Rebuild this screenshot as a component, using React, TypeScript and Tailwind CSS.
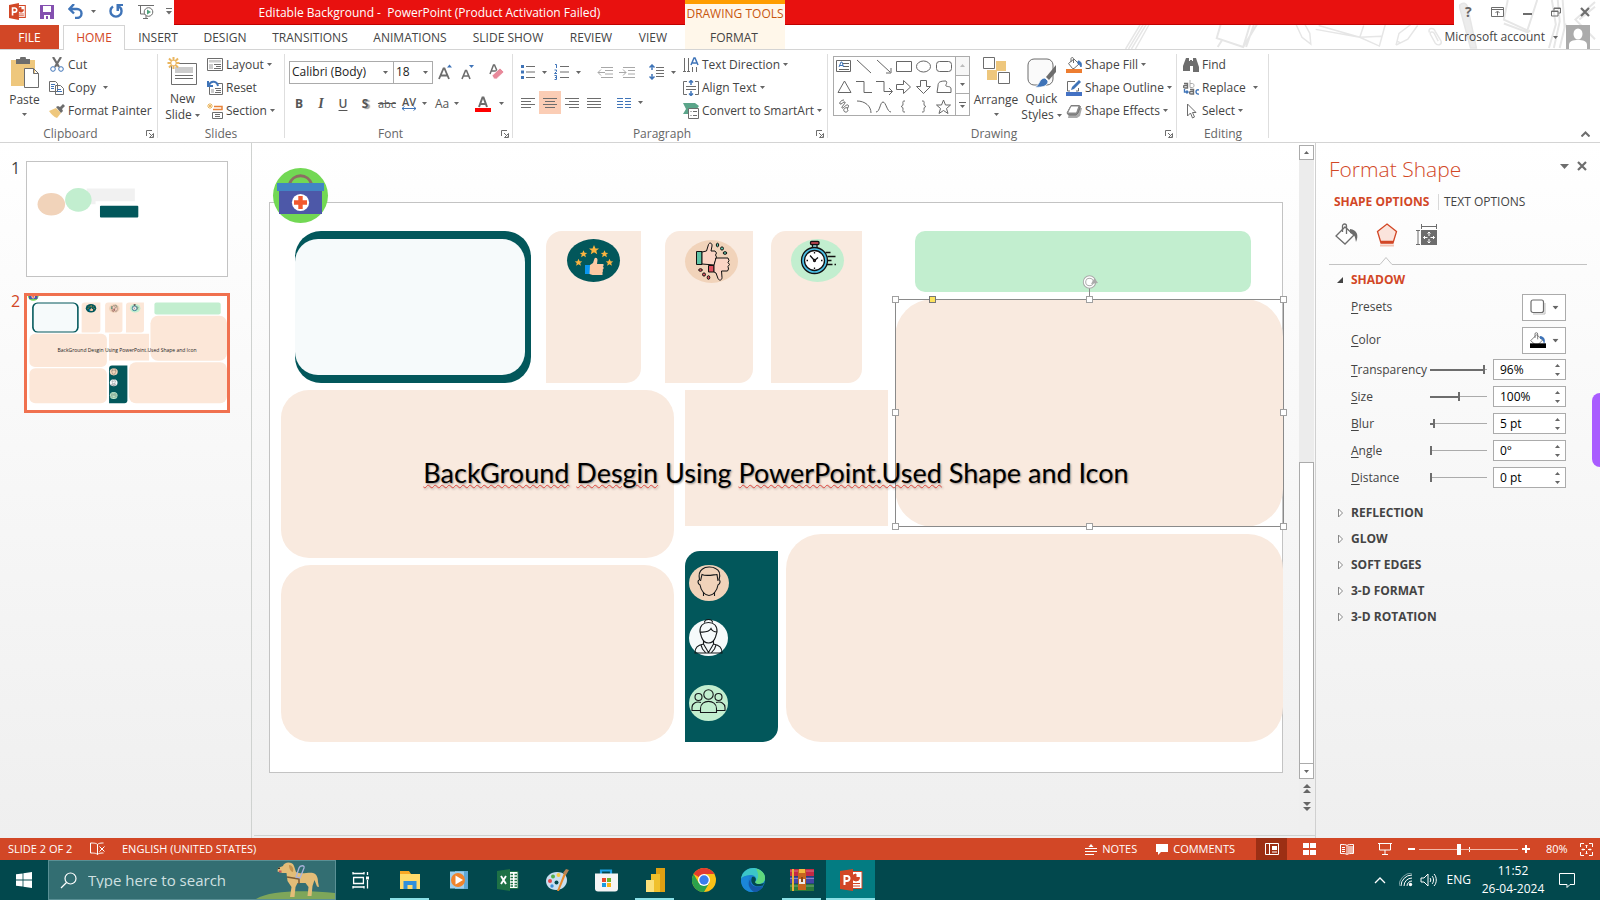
import React from "react";

type Kids = { children?: React.ReactNode };

const Svg = ({ s = 16, w, h, vb, className, children }: Kids & { s?: number; w?: number; h?: number; vb?: string; className?: string }) => (
  <svg width={w ?? s} height={h ?? s} viewBox={vb ?? `0 0 ${w ?? s} ${h ?? s}`} fill="none" stroke="#6d6d6d" strokeWidth="1" className={`shrink-0 ${className ?? ""}`} aria-hidden="true">
    {children}
  </svg>
);

const Arrow = ({ className = "" }: { className?: string }) => (
  <svg width="5" height="3" viewBox="0 0 5 3" className={`shrink-0 ${className}`} aria-hidden="true">
    <path d="M0 0h5L2.5 3z" fill="#666" />
  </svg>
);

const Sep = () => <span className="h-[22px] w-px shrink-0 bg-[#d9d9d9]" />;

const Row = ({ icon, text, arrow, wide }: { icon: React.ReactNode; text: string; arrow?: boolean; wide?: boolean }) => (
  <button className="flex h-[23px] items-center gap-[3px] whitespace-nowrap text-[#444]">
    {icon}
    <span>{text}</span>
    {arrow && <Arrow className={wide ? "ml-1" : ""} />}
  </button>
);

const Group = ({ label, launcher, width, children }: Kids & { label: string; launcher?: boolean; width: string }) => (
  <section aria-label={label} className={`relative flex shrink-0 flex-col pt-[3px] ${width}`}>
    <div className="flex h-[72px]">{children}</div>
    <div className="mt-[2px] flex h-4 items-center justify-center text-[#666]">{label}</div>
    {launcher && (
      <button aria-label={`${label} options`} className="absolute bottom-[4px] right-[4px]">
        <Svg s={8}>
          <path d="M.5 6V.5H6M3 3l3.5 3.5M7.5 3.5v4h-4z" />
        </Svg>
      </button>
    )}
    <span className="absolute bottom-1 right-0 top-1 w-px bg-[#dedede]" />
  </section>
);

const PptIcon = ({ s = 17 }: { s?: number }) => (
  <svg width={s} height={s} viewBox="0 0 24 24" className="shrink-0" aria-hidden="true">
    <path d="M12 3.5h11v17H12z" fill="#fff" stroke="#d24726" strokeWidth="1.5" />
    <path d="M17 6a3.5 3.5 0 1 0 3.5 3.5H17zM14 15.5h7M14 18h7" fill="#d24726" stroke="#d24726" strokeWidth="1.2" />
    <path d="M0 2.8 14 0v24L0 21.200z" fill="#d24726" />
    <path d="M5 17.500V7h3a2.800 2.800 0 0 1 0 5.800H5" fill="none" stroke="#fff" strokeWidth="2.300" />
  </svg>
);

const STAR = "M0-5 1.500-1.600 5-1.500 2.300.8 3.200 4.300 0 2.300-3.200 4.300-2.300.8-5-1.500-1.500-1.600z";

/* Shapes and clip art of slide 2, in slide units. */
const SlideArt = ({ thin }: { thin?: boolean }) => (
  <svg viewBox="0 0 1014 571" className={`absolute inset-0 h-full w-full ${thin ? "overflow-hidden" : "overflow-visible"}`} aria-hidden="true">
    <rect x="26" y="29" width="236" height="152" rx="26" fill="#02575b" />
    {thin ? <rect x="34" y="34" width="220" height="142" rx="22" fill="#f6fafb" /> : <rect x="26" y="37" width="230" height="136" rx="23" fill="#f6fafb" />}
    <g fill={thin ? "#fce7d8" : "#f9eadf"}>
      <path d="M277 181V45a16 16 0 0 1 16-16h79v137a15 15 0 0 1-15 15z" />
      <path d="M396 181V44a15 15 0 0 1 15-15h73v138a14 14 0 0 1-14 14z" />
      <path d="M502 181V44a15 15 0 0 1 15-15h76v138a14 14 0 0 1-14 14z" />
      <rect x="12" y="188" width="393" height="168" rx="28" />
      <rect x="416" y="188" width="203" height="136" />
      <rect x="12" y="363" width="393" height="177" rx="30" />
      <rect x="517" y="332" width="497" height="208" rx="35" />
      <rect x="626" y="97" width="388" height="228" rx="38" />
    </g>
    <rect x="646" y="29" width="336" height="61" rx="10" fill="#c2eecf" />
    <path d="M416 540V364a15 15 0 0 1 15-15h78v176a15 15 0 0 1-15 15z" fill="#02575b" />

    {/* first-aid kit */}
    <g>
      <circle cx="31.500" cy="-6.500" r="27.500" fill="#72d854" />
      <path d="M20.500-18a11.500 11.500 0 0 1 22 0" fill="none" stroke="#8d6e63" strokeWidth="3" />
      <path d="M10-12h43v24H10z" fill="#4d58a8" />
      <path d="M8-19h47v8H8z" fill="#4284c4" />
      <circle cx="31.500" cy="0.500" r="8.600" fill="#fff" />
      <path d="M31.500-6v13M25 .5h13" stroke="#f1592f" strokeWidth="4.400" />
    </g>

    {/* rating */}
    <ellipse cx="324.500" cy="58.500" rx="26.500" ry="21.500" fill="#02575b" />
    <g fill="#fbb340">
      <path d={STAR} transform="translate(325 48)" />
      <path d={STAR} transform="translate(314.500 52) scale(.75)" />
      <path d={STAR} transform="translate(335.500 52) scale(.75)" />
      <path d={STAR} transform="translate(309.500 60.500) scale(.75)" />
      <path d={STAR} transform="translate(340.500 60.500) scale(.75)" />
    </g>
    <path d="M316 63h6v9h-6z" fill="#0a96f0" />
    <path d="M321 63l3-2 1.500-4.500c1-1.500 3-.5 3 1.500l-.5 4h6.500v2l-.8.500.8.500v2l-.8.500.3 2-.5.500v3h-10l-3-1z" fill="#fdc9a4" />

    {/* thumbs up and down */}
    <ellipse cx="442.500" cy="59.500" rx="26.500" ry="21.500" fill="#f1d3ba" />
    <g stroke="#111" strokeWidth="1" strokeLinejoin="round">
      <path d="M427.500 49.500h5.500v13h-5.500z" fill="#5fc3a5" />
      <path d="M433 50l4.500-1 2-6.500c1-2.500 4-1.500 3.500 1.500l-1 5h4l1.500 2-1 2 1 2-1 2 1 2-2 1v3l-12.500-1z" fill="#fbd5c5" />
      <path d="M439.500 63.500h5.500v6.500h-5.500z" fill="#e0505e" />
      <path d="M447 56h12l1 2.500-1 2 1.500 2-1.500 2 .5 2.500-1 2h-6l.5 6.500c0 3-3 3.500-4 1l-2-5.500-2-1v-7z" fill="#fbd5c5" />
      <g fill="#5fc3a5">
        <ellipse cx="448.500" cy="43" rx="1.200" ry="1.800" />
        <ellipse cx="453" cy="46.500" rx="1.500" ry="1.600" />
        <ellipse cx="456" cy="51" rx="1.800" ry="1.300" />
      </g>
      <g fill="#e0505e">
        <ellipse cx="431.500" cy="68" rx="1.800" ry="1.300" />
        <ellipse cx="435" cy="72.500" rx="1.500" ry="1.600" />
        <ellipse cx="439.500" cy="75.500" rx="1.300" ry="1.800" />
      </g>
    </g>

    {/* stopwatch */}
    <ellipse cx="548.500" cy="58.500" rx="26.500" ry="21.500" fill="#c2eecf" />
    <g stroke="#111" strokeWidth="1.300" fill="none">
      <path d="M543.500 42h4.500v4h-4.500z" fill="#9adbe6" />
      <rect x="541.500" y="39.500" width="8.500" height="3" rx="1" fill="#e0505e" />
      <circle cx="545.500" cy="58.500" r="13" fill="#4cc3ea" />
      <circle cx="545.500" cy="58.500" r="10" fill="#fff" />
      <path d="M541 53.500l4.500 5 3.500-3M545.500 50v1.500M545.500 65.500V67M537.500 58.500h1.500M552 58.500h1.500" />
      <circle cx="545.500" cy="58.500" r="1" fill="#e0505e" />
      <path d="M556.500 50.500h5M558.500 54.500h8M559 58.500h3.500M557.500 62.500h6M565.500 62.500h1.500" />
    </g>

    {/* people */}
    <ellipse cx="440" cy="381" rx="20" ry="18" fill="#f1d3ba" />
    <g stroke="#15181a" strokeWidth="1.100" fill="none">
      <path d="M430.500 378c-1-5 0-9 3-11 3-2.500 10-2.500 13-.5 4 1.500 5 6 3.500 11.500M430.500 378c-2 0-2 4 .5 5 1 6 5 10.500 9 10.500s8-4.500 9-10.500c2.500-1 2.500-5 1-5M431.500 379l1.500-6.500c4 2 10 .5 15 0l1 6.500M434.500 390v4M445.500 390v4" />
    </g>
    <ellipse cx="439.500" cy="436" rx="19.500" ry="18" fill="#f6fafb" />
    <g stroke="#15181a" strokeWidth="1.100" fill="none">
      <path d="M435.500 420.500c0-4 8-4 8 0M431 430c-.5-6 3-9.500 8.500-9.500s9 3.500 8.500 9.500l-1.500 5c-1 3-3.500 6-7 6s-6-3-7-6zM431.500 430c6 .5 9-1 10.500-3.500 1 2 3.500 3.500 6 3.500M434.500 438.500v3.500c-6 1.500-8.500 3-8.500 9h27c0-6-2.500-7.500-8.500-9v-3.500M434.500 442l5 8.500 5-8.500M432 443l1.500 4 3 3.500M447 443l-1.500 4-3 3.500" />
    </g>
    <ellipse cx="439.500" cy="501" rx="19.500" ry="18" fill="#c2eecf" />
    <g stroke="#15181a" strokeWidth="1.100" fill="none">
      <circle cx="439.500" cy="492.500" r="4.700" />
      <circle cx="429.500" cy="495" r="3.500" />
      <circle cx="449.500" cy="495" r="3.500" />
      <path d="M431.500 510.500v-4c0-9.500 16-9.500 16 0v4zM431.500 508.500h-8.500v-3c0-4 4-6.500 9-5M447.500 508.500h8.500v-3c0-4-4-6.500-9-5" />
    </g>
  </svg>
);

const HANDLES: [number, number][] = [
  [626, 97], [820, 97], [1014, 97], [626, 210], [1014, 210], [626, 324], [820, 324], [1014, 324],
];

const Selection = () => (
  <svg viewBox="0 0 1014 571" className="absolute inset-0 h-full w-full overflow-visible" aria-hidden="true">
    <path d="M626.500 97.500h388v227h-388zM820.500 97V86" fill="none" stroke="#8a8a8a" />
    {HANDLES.map(([x, y]) => (
      <rect key={`${x}-${y}`} x={x - 2.5} y={y - 2.5} width="6" height="6" fill="#fff" stroke="#a0a0a0" />
    ))}
    <rect x="660.500" y="94.500" width="6" height="6" fill="#fde25d" stroke="#777" />
    <circle cx="820.500" cy="80" r="5" fill="#fff" stroke="#aaa" strokeWidth="3.400" />
    <circle cx="820.500" cy="80" r="5" fill="none" stroke="#fff" strokeWidth="1.400" />
    <path d="M822 82l7-1-3.500-5z" fill="#aaa" />
  </svg>
);

const TABS: [string, string][] = [
  ["INSERT", "w-[66px]"], ["DESIGN", "w-[68px]"], ["TRANSITIONS", "w-[102px]"], ["ANIMATIONS", "w-[98px]"],
  ["SLIDE SHOW", "w-[98px]"], ["REVIEW", "w-[68px]"], ["VIEW", "w-[56px]"],
];

const Doodles = () => (
  <svg viewBox="0 0 500 50" className="absolute right-0 top-0 h-[49px] w-[500px]" fill="none" stroke="#e6e6e6" strokeWidth="1.500" aria-hidden="true">
    <path d="M21 50 36 25M24 50 39 25M27 50 42 25M31 50 45 25" />
    <path d="M118 25l-4 14 27 9 14-23M141 48l7-23M120 40l-5 8M144 48l8-23" strokeWidth="2" />
    <path d="M195 25l6 13 9 7-1-11-5-9" />
    <path d="M215 30l45 8 20 9 6-22M218 26l42 12 4-12M260 38l22-1" />
    <path d="M297 46l3-12 12-9M297 46l12-6 10-14M298 42l4 2" />
    <path d="M331 33c-2-4 4-6 6-1l6 10c1 4-4 5-6 2l-5-9c-1-3 3-3 4-1l4 8" />
    <path d="M362 5c3-3 7-2 8 2l9 42h-6L362 8z" fill="#ececec" />
    <path d="M411 0l-4 20 24 11 10-31M407 24l24 9 3-2M456 0l4 25-7 24M462 0l2 22-6 27M467 0l2 28" strokeWidth="2" />
    <path d="M470 24l-6 25M500 2l-20 18 20 20M484 20l16-13" strokeWidth="2" />
  </svg>
);

const Header = () => (
  <header className="relative shrink-0 bg-white">
    <Doodles />
    <div className="relative flex h-[25px]">
      <div className="flex w-[174px] shrink-0 items-center pb-[2px] pl-[9px]">
        <PptIcon />
        <button aria-label="Save" className="ml-[14px]">
          <Svg s={14}><path d="M0 0h14v14H0z" fill="#8450b0" stroke="none" /><path d="M3 1h8v6H3zM4 10h6v4H4z" fill="#fff" stroke="none" /><path d="M6 11h2v3H6z" fill="#8450b0" stroke="none" /></Svg>
        </button>
        <button aria-label="Undo" className="ml-[14px] flex items-center gap-2">
          <Svg s={15}><path d="M2 5h7a4 4 0 0 1 0 9H7M6 0 1.500 5 6 9.500" stroke="#3f74b8" strokeWidth="2.400" /></Svg>
          <Arrow />
        </button>
        <button aria-label="Repeat" className="ml-[13px]">
          <Svg s={15}><path d="M4 2.500a5.500 5.500 0 1 0 6 0" stroke="#3f74b8" strokeWidth="2.400" /><path d="M7.500 0H14v2H10v5H7.500z" fill="#3f74b8" stroke="none" /></Svg>
        </button>
        <button aria-label="Start from beginning" className="ml-[14px]">
          <Svg w={16} h={16}><path d="M0 1.500h16M2.500 2v8H7M5 14.500h5M8 11v4" /><circle cx="10.500" cy="8" r="4.300" fill="#fff" /><path d="M9 5.500v5l4-2.500z" fill="#4ea37b" stroke="none" /></Svg>
        </button>
        <button aria-label="Customize toolbar" className="ml-[12px]">
          <Svg w={6} h={7}><path d="M0 .5h6" /><path d="M0 3h6L3 6.500z" fill="#6d6d6d" stroke="none" /></Svg>
        </button>
      </div>
      <div className="flex w-[511px] shrink-0 items-center justify-center whitespace-pre border-b border-[#c00000] bg-[#e8110f] pt-[2px] text-white">
        {"Editable Background -  PowerPoint (Product Activation Failed)"}
      </div>
      <div className="flex w-[100px] shrink-0 items-center justify-center whitespace-nowrap border-t-4 border-[#ff9d00] bg-[#fff7ea] pb-[2px] text-[#c8560e]">DRAWING TOOLS</div>
      <div className="grow border-b border-[#c00000] bg-[#e8110f]" />
      <div className="flex w-[146px] shrink-0 items-center justify-between pb-[2px] pl-[11px] pr-[10px]">
        <button aria-label="Help" className="text-[14px] font-bold leading-none text-[#666]">?</button>
        <button aria-label="Ribbon display options"><Svg w={13} h={10}><path d="M.5.500h12v9H.5zM.5 2.500h12M6.500 8.500V4.500M4.500 6l2-2 2 2" /></Svg></button>
        <button aria-label="Minimize"><Svg w={9} h={10}><path d="M0 7h9" strokeWidth="2" /></Svg></button>
        <button aria-label="Restore"><Svg s={10}><path d="M.5 4h6.500v5H.5zM.5 4.500H7M3 3.500V1h6.500v5H7.500M3 1.500h6" /></Svg></button>
        <button aria-label="Close"><Svg s={10}><path d="M1 1l8 8M9 1 1 9" strokeWidth="2.200" /></Svg></button>
      </div>
    </div>
    <nav className="relative flex h-[25px] items-stretch border-b border-[#d4d4d4] text-[#444]">
      <button className="w-[59px] bg-[#d24726] pt-[2px] text-white">FILE</button>
      <button className="-mb-px ml-1 w-[62px] border border-b-0 border-[#d4d4d4] bg-white text-[#d24726]">HOME</button>
      {TABS.map(([t, w]) => (
        <button key={t} className={`whitespace-nowrap pt-[2px] ${w}`}>{t}</button>
      ))}
      <button className="ml-1 w-[100px] bg-[#fff7ea] pr-[2px] pt-[2px]">FORMAT</button>
      <div className="grow" />
      <button className="flex items-center gap-2 pr-[8px]">Microsoft account<Arrow /></button>
      <svg width="24" height="24" viewBox="0 0 24 24" className="mr-[10px]" aria-hidden="true">
        <path d="M0 0h24v24H0z" fill="#ababab" />
        <ellipse cx="12" cy="9" rx="4.500" ry="5.500" fill="#fff" />
        <path d="M3 24v-4c0-4 4-5 9-5s9 1 9 5v4z" fill="#fff" />
      </svg>
    </nav>
  </header>
);

const LINES: Record<string, string> = {
  left: "M0 1.500h14M0 4.500h10M0 7.500h14M0 10.500h10",
  center: "M0 1.500h14M2 4.500h10M0 7.500h14M2 10.500h10",
  right: "M0 1.500h14M4 4.500h10M0 7.500h14M4 10.500h10",
  full: "M0 1.500h14M0 4.500h14M0 7.500h14M0 10.500h14",
};

const Align = ({ kind, on }: { kind: string; on?: boolean }) => (
  <button aria-label={`Align ${kind}`} className={`flex h-[23px] w-[22px] items-center justify-center ${on ? "bg-[#fbcdb5]" : ""}`}>
    <Svg w={14} h={12}><path d={LINES[kind]} /></Svg>
  </button>
);

const Letter = ({ className = "", children, name }: Kids & { className?: string; name: string }) => (
  <button aria-label={name} className={`w-[22px] text-center text-[#555] ${className}`}>{children}</button>
);

const Ribbon = () => (
  <div className="relative flex h-[93px] shrink-0 border-b border-[#d4d4d4] bg-white">
    <Group label="Clipboard" launcher width="w-[158px] pr-[17px]">
      <button className="flex w-[49px] shrink-0 flex-col items-center pt-[4px] text-[#444]">
        <Svg w={30} h={32}>
          <path d="M1 3h24v26H1z" fill="#eec77d" stroke="none" />
          <path d="M6 2h4a3 3 0 0 1 6 0h4v5H6z" fill="#6d6d6d" stroke="none" />
          <path d="M14.500 11.500h9l5 5v14h-14zM23.500 11.500v5h5" fill="#fff" />
        </Svg>
        <span className="mt-[3px] leading-4">Paste</span>
        <Arrow className="mt-[5px]" />
      </button>
      <div className="flex flex-col">
        <Row text="Cut" icon={<Svg><path d="M4 0l6 10M12 0 6 10" strokeWidth="2.200" /><circle cx="4" cy="12" r="2.300" stroke="#3f74b8" /><circle cx="12" cy="12" r="2.300" stroke="#3f74b8" /></Svg>} />
        <Row text="Copy" arrow wide icon={<Svg><path d="M.5 1.500h6l2 2v8h-8zM6.500 5.500h5l3 3v6h-8z" fill="#fff" /><path d="M2 4.500h4M2 6.500h3M2 8.500h3M8 9.500h4M8 11.500h5" stroke="#3f74b8" /></Svg>} />
        <Row text="Format Painter" icon={<Svg><path d="M7 5l5 5-4 5C5 14 2 11 0 8z" fill="#eec77d" stroke="none" /><path d="M7 4l2-1 2 1 3-3 2 2-3 3 1 2-2 2z" fill="#6d6d6d" stroke="none" /></Svg>} />
      </div>
    </Group>

    <Group label="Slides" width="w-[127px] pr-[1px]">
      <button className="flex w-[49px] shrink-0 flex-col items-center pt-[3px] leading-4 text-[#444]">
        <Svg w={32} h={29}>
          <path d="M4.500 7.500h25v21h-25zM8 19.500h18M8 22.500h18" />
          <path d="M8 11h18v6H8z" fill="#ccc" stroke="none" />
          <path d="M6.500 1v12M.5 7h12M2 2.500l9 9M11 2.500l-9 9" stroke="#eab660" strokeWidth="2" />
          <circle cx="6.500" cy="7" r="2.200" fill="#fff" stroke="none" />
        </Svg>
        <span className="mt-[6px]">New</span>
        <span className="flex items-center gap-[3px]">Slide<Arrow /></span>
      </button>
      <div className="flex flex-col">
        <Row text="Layout" arrow icon={<Svg><path d="M.5 1.500h15v12H.5zM7 7.500h7M9 9.500h5M7 11.500h7" /><path d="M2 3h12v2.500H2zM2 7h4v5H2z" fill="#ccc" stroke="none" /></Svg>} />
        <Row text="Reset" icon={<Svg><path d="M2.500 7v7.500h13v-11H11M8 8.500h6M9 10.500h5M8 12.500h6" /><path d="M4 9h3v4H4z" fill="#ccc" stroke="none" /><path d="M2 5c2-5 8-4 9 1M1 1v5h5" stroke="#3f74b8" strokeWidth="2" /></Svg>} />
        <Row text="Section" arrow icon={<Svg><path d="M5.500 9.500h10v6h-10zM8 11.500h5M8 13.500h5" /><path d="M7 3.500h8v3H6" stroke="#e8833a" strokeWidth="1.500" /><path d="M3 0v6M0 3h6M1 1l4 4M5 1 1 5" stroke="#eab660" /></Svg>} />
      </div>
    </Group>

    <Group label="Font" launcher width="w-[228px] pr-[17px]">
      <div className="flex shrink-0 flex-col pl-[4px] pt-[8px]">
        <div className="flex h-[22px] items-center">
          <div className="relative flex h-[23px] w-[105px] items-center border border-[#ababab]">
            <select aria-label="Font" className="w-full appearance-none pl-[2px] text-[#222] outline-none"><option>Calibri (Body)</option></select>
            <Arrow className="absolute right-[5px]" />
          </div>
          <div className="relative -ml-px flex h-[23px] w-[40px] items-center border border-[#ababab]">
            <select aria-label="Font size" className="w-full appearance-none pl-[2px] text-[#222] outline-none"><option>18</option></select>
            <Arrow className="absolute right-[4px]" />
          </div>
          <button aria-label="Increase font size" className="ml-[5px]"><Svg><path d="M1 15 5.500 4.500h1L11 15M3 11.500h6" strokeWidth="1.800" /><path d="M9 3.500h5L11.500.5z" fill="#3f74b8" stroke="none" /></Svg></button>
          <button aria-label="Decrease font size" className="ml-[7px]"><Svg><path d="M1 15 4.500 6.500h1L9 15M2.500 12h5" strokeWidth="1.600" /><path d="M8 1h5l-2.500 3z" fill="#3f74b8" stroke="none" /></Svg></button>
          <span className="ml-[4px]"><Sep /></span>
          <button aria-label="Clear formatting" className="ml-[8px]"><Svg><path d="M1 10 4.500 1h1L9 9M2.500 7h5" strokeWidth="1.500" /><path d="M3 11.500 11 4l4 4-7.500 7H5z" fill="#e8899a" stroke="#fff" strokeWidth=".8" /></Svg></button>
        </div>
        <div className="-ml-px mt-[9px] flex h-[23px] items-center">
          <Letter name="Bold" className="font-bold">B</Letter>
          <Letter name="Italic" className="font-['Liberation_Serif',serif] text-[14px] font-bold italic">I</Letter>
          <Letter name="Underline" className="font-semibold underline underline-offset-2">U</Letter>
          <Letter name="Shadow" className="font-bold [text-shadow:2px_1px_1px_#999]">S</Letter>
          <Letter name="Strikethrough" className="text-[11px] line-through">abc</Letter>
          <button aria-label="Character spacing" className="ml-[3px] flex items-center gap-[5px]">
            <span className="flex flex-col items-center text-[#555]">
              <span className="text-[11px] font-semibold leading-[9px]">AV</span>
              <Svg w={16} h={5}><path d="M1 2.500h14M3.500.500 1 2.500l2.500 2M12.500.500l2.500 2-2.500 2" stroke="#3f74b8" /></Svg>
            </span>
            <Arrow />
          </button>
          <button aria-label="Change case" className="ml-[8px] flex items-center gap-[5px] text-[#555]">Aa<Arrow /></button>
          <span className="ml-[8px]"><Sep /></span>
          <button aria-label="Font color" className="ml-[8px] flex items-center gap-[8px]">
            <Svg><path d="M4 11 7.500 1.500h1L12 11M5.500 8h5" strokeWidth="2" /><path d="M0 12h16v4H0z" fill="#f00" stroke="none" /></Svg>
            <Arrow />
          </button>
        </div>
      </div>
    </Group>

    <Group label="Paragraph" launcher width="w-[315px] pr-[17px]">
      <div className="flex w-[170px] shrink-0 flex-col pl-[4px] pt-[8px]">
        <div className="flex h-[22px] items-center pl-[4px]">
          <button aria-label="Bullets" className="flex items-center gap-[7px]"><Svg w={14} h={16}><path d="M5 2.500h9M5 8h9M5 13.500h9" /><path d="M0 1h3v3H0zM0 6.500h3v3H0zM0 12h3v3H0z" fill="#3f74b8" stroke="none" /></Svg><Arrow /></button>
          <button aria-label="Numbering" className="ml-[7px] flex items-center gap-[7px]"><Svg w={15} h={16}><path d="M6 2.500h9M6 8h9M6 13.500h9" /><path d="M1 .5h1.500V4M.5 6h2v1.500L.5 9.500h2.500M.5 11.500h2v4h-2M1 13.500h1" stroke="#3f74b8" /></Svg><Arrow /></button>
          <span className="ml-[8px]"><Sep /></span>
          <button aria-label="Decrease indent" className="ml-[8px]"><Svg w={16} h={11}><path d="M4 .5h12M8 3.500h8M8 7h8M4 10.500h12M1 5.500h7M4 2.500l-3 3 3 3" stroke="#a8a8a8" /></Svg></button>
          <button aria-label="Increase indent" className="ml-[6px]"><Svg w={16} h={11}><path d="M4 .5h12M9 3.500h7M9 7h7M4 10.500h12M0 5.500h7M4 2.500l3 3-3 3" stroke="#a8a8a8" /></Svg></button>
          <span className="ml-[7px]"><Sep /></span>
          <button aria-label="Line spacing" className="ml-[7px] flex items-center gap-[7px]"><Svg w={15} h={16}><path d="M7 3.500h8M7 6.500h8M7 9.500h8M7 12.500h8" /><path d="M3 1v5M.5 3.500 3 1l2.500 2.500M3 15v-5M.5 12.500 3 15l2.500-2.500" stroke="#3f74b8" strokeWidth="1.500" /></Svg><Arrow /></button>
        </div>
        <div className="mt-[8px] flex h-[23px] items-center">
          <Align kind="left" /><Align kind="center" on /><Align kind="right" /><Align kind="full" />
          <span className="ml-[4px]"><Sep /></span>
          <button aria-label="Columns" className="ml-[8px] flex items-center gap-[7px]"><Svg w={14} h={12}><path d="M0 1.500h6M0 4.500h6M0 7.500h6M0 10.500h6M8 1.500h6M8 4.500h6M8 7.500h6M8 10.500h6" stroke="#3f74b8" /></Svg><Arrow /></button>
        </div>
      </div>
      <div className="flex flex-col">
        <Row text="Text Direction" arrow icon={<Svg><path d="M1.500 1v14M5.500 1v14M9.500 10v5M13.500 10v5M0 14.500h3M4 14.500h3" /><path d="M8 8l3-7h1l3 7M9.500 6h4" stroke="#3f74b8" strokeWidth="1.500" /></Svg>} />
        <Row text="Align Text" arrow icon={<Svg><path d="M4 1.500H.5v13H4M12 1.500h3.500v13H12M3 6.500h10M3 9.500h10" /><path d="M8 0v5M6 2.500l2-2 2 2M8 16v-5M6 13.500l2 2 2-2" stroke="#3f74b8" strokeWidth="1.500" /></Svg>} />
        <Row text="Convert to SmartArt" arrow icon={<Svg><path d="M0 0h12l4 3-3 4H5v4H0l3-5z" fill="#5ba58a" stroke="none" /><path d="M5.500 5.500h10v10h-10zM7.500 8.500h1M10 8.500h4M7.500 12.500h1M10 12.500h4" fill="#fff" /></Svg>} />
      </div>
    </Group>

    <Group label="Drawing" launcher width="w-[349px] pr-[17px]">
      <div className="ml-[5px] mt-[3px] flex h-[60px] w-[137px] shrink-0 border border-[#ababab]">
        <svg width="121" height="58" viewBox="0 0 121 58" fill="none" stroke="#666" className="shrink-0" aria-hidden="true">
          <path d="M2.500 3.500h14v11h-14zM9 6.500h6M9 9.500h6M5 12.500h10M23 3l14 13M43 3l13 12M57 11v5h-5M62.500 4.500h15v10h-15z" />
          <path d="M5 10l2-5h1l1.500 5M5.500 8.500h3.500" stroke="#3f74b8" />
          <ellipse cx="89.500" cy="9.500" rx="7" ry="5.500" />
          <rect x="102.500" y="4.500" width="15" height="10" rx="3" />
          <path d="M10.500 24l6.500 11.500h-13zM22 24.500h8v11h8M42 24.500h8v10h8M55 31l3.500 3.500L55 38M62.500 27.500h7v-4l7 6.500-7 6.500v-4h-7zM86.500 23.500h6v6h4l-7 7-7-7h4zM104 29c0-4 2-5 8-5 2 2-1 4 0 5 2 1 5 0 5 3v3.500h-14z" />
          <path d="M10 43c-3 0-5 3-4 4s4-3 5-2-4 5-3 6 4-4 6-3-2 4 0 5M14 51c-3-1-5 1-4 3s4 1 4-1M23 44c8 0 14 5 14 12M42 55c4 0 4-10 7-10s4 10 8 10" />
          <path d="M71 44c-3 0-2 1-2 3s-1 2-2 2.500c1 .5 2 .5 2 2.500s-1 3 2 3M88 44c3 0 2 1 2 3s1 2 2 2.500c-1 .5-2 .5-2 2.500s1 3-2 3M109.500 43l2 5h5l-4 3.500 1.500 5-4.500-3-4.500 3 1.500-5-4-3.500h5z" />
        </svg>
        <div className="flex w-[14px] flex-col divide-y divide-[#ababab] border-l border-[#ababab]">
          <button aria-label="Previous shapes" className="flex grow items-center justify-center bg-[#f7f7f7]"><Arrow className="rotate-180 opacity-40" /></button>
          <button aria-label="Next shapes" className="flex grow items-center justify-center"><Arrow /></button>
          <button aria-label="More shapes" className="flex grow flex-col items-center justify-center gap-[2px]"><span className="h-px w-[7px] bg-[#666]" /><Arrow /></button>
        </div>
      </div>
      <button className="ml-[3px] flex w-[46px] shrink-0 flex-col items-center pt-[4px] text-[#444]">
        <Svg w={28} h={28}>
          <path d="M14 4h10v10H14zM5 13h10v10H5z" fill="#eec77d" stroke="none" />
          <path d="M1.500.5h11v11h-11zM16.500 15.500h11v11h-11z" fill="#fff" />
        </Svg>
        <span className="mt-[7px] leading-4">Arrange</span>
        <Arrow className="mt-[5px]" />
      </button>
      <button className="flex w-[45px] shrink-0 flex-col items-center pt-[5px] leading-4 text-[#444]">
        <Svg w={30} h={30}>
          <rect x="1" y="1" width="25" height="26" rx="6" fill="#fafafa" />
          <path d="M29 7v7l-7 8-3-3z" fill="#6d6d6d" stroke="none" />
          <path d="M18 20l3 3c0 4-4 7-13 6 5-2 4-9 10-9z" fill="#3f74b8" stroke="#fff" strokeWidth=".8" />
        </Svg>
        <span className="mt-[3px]">Quick</span>
        <span className="flex items-center gap-[3px]">Styles<Arrow /></span>
      </button>
      <div className="ml-[2px] flex flex-col">
        <Row text="Shape Fill" arrow icon={<Svg><path d="M2.500 6.500 8 2l5 5-5 4.500H6.500z" fill="#fff" /><path d="M7.500 6V1.500a1.300 1.300 0 0 0-2.500 0V5" /><path d="M12 4c3 0 4 3 3 6-1-1-1-3-3-3z" fill="#3f74b8" stroke="#3f74b8" /><path d="M0 12h16v4H0z" fill="#ed7d31" stroke="none" /></Svg>} />
        <Row text="Shape Outline" arrow icon={<Svg><path d="M9 1.500H1.500V11H4M12.500 8v3H10" /><path d="M5 10l1-3 7-7 2 2-7 7z" fill="#3f74b8" stroke="none" /><path d="M0 12h16v4H0z" fill="#4472c4" stroke="none" /></Svg>} />
        <Row text="Shape Effects" arrow icon={<Svg><path d="M4 5h12l-2 8-3 2H2z" fill="#aaa" stroke="none" /><path d="M5 2.500h8l1.500 1L12 10l-2 2H2.500L1 10z" fill="#888" stroke="#777" /><path d="M5 3h8l-2.500 7H1.500z" fill="#fff" stroke="#888" /></Svg>} />
      </div>
    </Group>

    <Group label="Editing" width="w-[92px]">
      <div className="flex flex-col pl-[6px]">
        <Row text="Find" icon={<Svg><path d="M3 1h3v3h1V3h2v1h1V1h3l3 9v5h-6V9H7v5H0V9z" fill="#6d6d6d" stroke="none" /></Svg>} />
        <Row text="Replace" arrow wide icon={<Svg><path d="M1 3.500h3.500V8H2C0 8 0 5.500 2 5.500h2.500M7 9.500h3.500V14H8c-2 0-2-2.500 0-2.500h2.500" strokeWidth="1.400" /><path d="M7 0v7.500h2.500c2 0 2-4 0-4H7" stroke="#aaa" /><path d="M1.500 9v3H5M3.500 10.500 5 12l-1.500 1.500M16 10c-4-1.500-4 5 0 4" stroke="#3f74b8" strokeWidth="1.400" /></Svg>} />
        <Row text="Select" arrow icon={<Svg><path d="M4.500 1v12l3-3 2 5 2-1-2-4.500h3.500z" /></Svg>} />
      </div>
    </Group>
    <button aria-label="Collapse ribbon" className="absolute bottom-[5px] right-[10px]"><Svg w={9} h={6}><path d="M.5 5.500l4-4 4 4" strokeWidth="2" /></Svg></button>
  </div>
);

const TITLE = "BackGround Desgin Using PowerPoint.Used Shape and Icon";
const WAVE = "underline decoration-[#e0483f] decoration-wavy decoration-1 underline-offset-1";

const Thumbs = () => (
  <aside className="flex w-[252px] shrink-0 flex-col gap-[16px] border-r border-[#cfd2d0] pl-[10px] pt-[18px] text-[#444]">
    <div className="flex gap-[5px]">
      <span className="w-[11px] pl-px text-[16px] leading-[14px]">1</span>
      <svg viewBox="0 0 202 116" className="h-[116px] w-[202px] border border-[#c3c3c3] bg-white" aria-label="Slide 1" role="img">
        <path d="M60 27h49v13H69v3h-9z" fill="#f1f1f1" />
        <ellipse cx="24" cy="43" rx="14" ry="11.500" fill="#f1d3ba" />
        <ellipse cx="51.500" cy="38.500" rx="13.500" ry="12" fill="#c2eecf" />
        <rect x="73.500" y="44.500" width="39" height="12" rx="1" fill="#02575b" />
      </svg>
    </div>
    <div className="flex gap-[3px]">
      <span className="w-[11px] pl-px text-[16px] leading-[16px] text-[#d24726]">2</span>
      <div className="relative h-[120px] w-[206px] border-[3px] border-[#f0714f] bg-white">
        <SlideArt thin />
        <div className="absolute inset-x-0 top-[50px] whitespace-nowrap text-center text-[5px] leading-[8px] text-[#222]">{TITLE}</div>
      </div>
    </div>
  </aside>
);

const Stage = () => (
  <main className="flex min-w-0 grow flex-col">
    <div className="flex min-h-0 grow">
      <div className="min-w-0 grow pl-[17px] pr-[16px] pt-[59px]">
        <div className="relative aspect-[1014/571] bg-white outline outline-1 -outline-offset-1 outline-[#c3c3c3]">
          <SlideArt />
          <Selection />
          <h1 className="absolute inset-x-0 top-[44%] whitespace-nowrap text-center font-['Lato',sans-serif] text-[27px] leading-[40px] text-black [text-shadow:1px_1px_2px_#0006]">
            <span className={WAVE}>BackGround</span> <span className={WAVE}>Desgin</span> Using <span className={WAVE}>PowerPoint.Used</span> Shape and Icon
          </h1>
        </div>
      </div>
      <div className="mr-px mt-[2px] flex w-[15px] shrink-0 flex-col bg-[#ececec]">
        <button aria-label="Scroll up" className="flex h-[15px] items-center justify-center border border-[#ababab] bg-white"><Arrow className="rotate-180" /></button>
        <div className="grow" />
        <div className="h-[302px] border border-[#ababab] bg-white" />
        <button aria-label="Scroll down" className="flex h-[15px] items-center justify-center border border-t-0 border-[#ababab] bg-white"><Arrow /></button>
        <div className="flex h-[56px] flex-col items-center gap-[9px] bg-[#efefef] pt-[5px]">
          <button aria-label="Previous slide"><Svg w={8} h={9} className="block"><path d="M0 4l4-4 4 4zM0 9l4-4 4 4z" fill="#666" stroke="none" /></Svg></button>
          <button aria-label="Next slide"><Svg w={8} h={9} className="block"><path d="M0 0l4 4 4-4zM0 5l4 4 4-4z" fill="#666" stroke="none" /></Svg></button>
        </div>
      </div>
    </div>
    <div className="mb-[2px] ml-[2px] h-px bg-[#cfd2d0]" />
  </main>
);

const SLIDERS: [string, string, string, number][] = [
  ["T", "ransparency", "96%", 96], ["S", "ize", "100%", 50], ["B", "lur", "5 pt", 5], ["A", "ngle", "0°", 0], ["D", "istance", "0 pt", 0],
];

const Bucket = ({ accent, bar }: { accent: string; bar?: boolean }) => (
  <svg width={bar ? 16 : 24} height={bar ? 16 : 24} viewBox="0 0 24 24" fill="none" stroke="#6d6d6d" strokeWidth="1.300" aria-hidden="true">
    <path d="M1 13 10 4l9 8-9 9z" fill="#fff" />
    <path d="M7.500 9V3a2 2 0 0 1 4 0v8" />
    <path d="M15 6c7 1 9 6 6 13-1-5-1-8-6-9z" fill={accent} stroke="none" />
    {bar && <path d="M0 17h24v7H0z" fill="#000" stroke="none" />}
  </svg>
);

const FormatPane = () => (
  <aside className="flex w-[285px] shrink-0 flex-col border-l border-[#d0d0d0] pl-[13px] pr-[13px] text-[#444]">
    <div className="mt-[12px] flex h-[28px] items-center">
      <h2 className="grow text-[21px] font-light leading-[28px] text-[#d24726]">Format Shape</h2>
      <button aria-label="Pane options" className="-mt-[6px]"><Svg w={9} h={5}><path d="M0 0h9L4.500 5z" fill="#6d6d6d" stroke="none" /></Svg></button>
      <button aria-label="Close pane" className="-mt-[6px] ml-[8px]"><Svg s={10}><path d="M1 1l8 8M9 1 1 9" strokeWidth="2.200" /></Svg></button>
    </div>
    <div className="mt-[11px] flex h-[16px] items-center whitespace-nowrap pl-[5px]">
      <button className="w-[104px] text-left font-bold text-[#d24726]">SHAPE OPTIONS</button>
      <span className="mr-[5px] h-4 w-px bg-[#d9d9d9]" />
      <button>TEXT OPTIONS</button>
    </div>
    <div className="mt-[12px] flex h-[26px] items-center gap-[17px] pl-[6px]">
      <button aria-label="Fill and line"><Bucket accent="#6d6d6d" /></button>
      <button aria-label="Effects"><Svg w={22} h={24}><path d="M11 1l9.500 7.500L17 20H5L1.500 8.500z" fill="#fbe4dc" stroke="#d24726" strokeWidth="1.300" /><path d="M5 19h12" stroke="#d24726" strokeWidth="2.500" /><path d="M4 21.500h14v2H4z" fill="#f3c4b5" stroke="none" /></Svg></button>
      <button aria-label="Size and properties"><Svg w={22} h={24}><path d="M1 7.500h4M3 8v13M1 21.500h4M6.500 1v5M6.500 3.500h15M21.500 1v5" /><path d="M6 7h16v15H6z" fill="#6d6d6d" stroke="none" /><path d="M14 9v4M14 16v4M8.500 14.500h4M15.500 14.500h4M12.500 10.500 14 9l1.500 1.500M12.500 18.500 14 20l1.500-1.500M10 13l-1.500 1.500L10 16M18 13l1.500 1.500L18 16" stroke="#fff" /></Svg></button>
    </div>
    <svg viewBox="0 0 258 9" className="mt-[8px] h-[9px] w-full shrink-0" preserveAspectRatio="none" fill="none" stroke="#c3c3c3" aria-hidden="true"><path d="M0 8.500h51l6-7 6 7h195" /></svg>
    <button className="mt-[7px] flex h-[16px] items-center pl-[8px] font-bold text-[#d24726]"><Svg w={14} h={8}><path d="M0 7 6 1v6z" fill="#444" stroke="none" /></Svg>SHADOW</button>

    <div className="flex flex-col pl-[22px] pr-[21px]">
      <div className="mt-[6px] flex h-[26px] items-center justify-between">
        <span><u className="underline-offset-2">P</u>resets</span>
        <button aria-label="Presets" className="flex h-[27px] w-[44px] items-center justify-center gap-[7px] border border-[#ababab] bg-white"><Svg><path d="M3 15h12V4" stroke="#bbb" /><rect x="1" y="1" width="12.500" height="12.500" rx="2" fill="#fff" strokeWidth="1.200" /></Svg><Arrow className="scale-125" /></button>
      </div>
      <div className="mt-[7px] flex h-[26px] items-center justify-between">
        <span><u className="underline-offset-2">C</u>olor</span>
        <button aria-label="Color" className="flex h-[27px] w-[44px] items-center justify-center gap-[7px] border border-[#ababab] bg-white"><Bucket accent="#3f74b8" bar /><Arrow className="scale-125" /></button>
      </div>
      <div className="mt-[6px] flex flex-col gap-[6px]">
        {SLIDERS.map(([key, rest, value, pos]) => (
          <div key={key} className="flex h-[21px] items-center">
            <label htmlFor={`v-${key}`} className="w-[79px]"><u className="underline-offset-2">{key}</u>{rest}</label>
            <span className="relative flex h-[10px] w-[57px] items-center">
              <span className="absolute left-0 h-[2px] bg-[#6d6d6d]" style={{ width: `${pos}%` }} />
              <input type="range" aria-label={`${key}${rest}`} defaultValue={pos} className="h-[9px] w-full appearance-none bg-transparent [&::-webkit-slider-runnable-track]:h-px [&::-webkit-slider-runnable-track]:bg-[#ababab] [&::-webkit-slider-thumb]:-mt-1 [&::-webkit-slider-thumb]:h-[9px] [&::-webkit-slider-thumb]:w-[2px] [&::-webkit-slider-thumb]:appearance-none [&::-webkit-slider-thumb]:bg-[#6d6d6d]" />
            </span>
            <span className="ml-[6px] flex h-[21px] grow items-center border border-[#ababab] bg-white pr-[5px]">
              <input id={`v-${key}`} defaultValue={value} className="w-0 grow bg-transparent pl-[6px] text-black outline-none" />
              <span className="flex flex-col gap-[6px]">
                <button aria-label="Increase" className="leading-none"><Arrow className="block rotate-180" /></button>
                <button aria-label="Decrease" className="leading-none"><Arrow className="block" /></button>
              </span>
            </span>
          </div>
        ))}
      </div>
    </div>
    <div className="mt-[12px] flex flex-col">
      {["REFLECTION", "GLOW", "SOFT EDGES", "3-D FORMAT", "3-D ROTATION"].map((t) => (
        <button key={t} className="flex h-[26px] items-center pl-[8px] font-bold"><Svg w={14} h={10}><path d="M1.500 1v8L5.500 5z" fill="#fff" stroke="#888" /></Svg>{t}</button>
      ))}
    </div>
  </aside>
);

const StatusBar = () => (
  <footer className="flex h-[22px] shrink-0 items-center whitespace-nowrap bg-[#d24726] pl-2 pr-[7px] text-[11px] text-white">
    <span className="w-[82px]">SLIDE 2 OF 2</span>
    <Svg w={15} h={14}><path d="M7.500 12.500c-1-1-2-1.500-7-1.500V1c5 0 6 .5 7 1.500zM7.500 12.500V2.500c1-1 2-1.500 6-1.500M7.500 12.500c1-1 2-1.500 6-1.500M9.500 4.500l5 5M14.500 4.500l-5 5" stroke="#fff" /></Svg>
    <button className="ml-[17px]">ENGLISH (UNITED STATES)</button>
    <span className="grow" />
    <button className="flex items-center gap-[5px]"><Svg w={12} h={11}><path d="M0 4.500h12M0 7.500h12M0 10.500h9" stroke="#fff" /><path d="M3.500 3 6 0l2.500 3z" fill="#fff" stroke="none" /></Svg>NOTES</button>
    <button className="ml-[19px] flex items-center gap-[5px]"><Svg w={12} h={11}><path d="M0 0h12v8H5l-3 3V8H0z" fill="#fff" stroke="none" /></Svg>COMMENTS</button>
    <button aria-label="Normal view" className="ml-[21px] flex h-[22px] w-[31px] items-center justify-center bg-[#9c2f14]"><Svg w={14} h={12}><path d="M.5.500h13v11H.5zM4.500.500v11" stroke="#fff" /><path d="M7 3h5v4H7zM7 8.500h5v1H7z" fill="#fff" stroke="none" /></Svg></button>
    <button aria-label="Slide sorter" className="ml-[16px]"><Svg w={13} h={12}><path d="M0 0h6v5H0zM7 0h6v5H7zM0 7h6v5H0zM7 7h6v5H7z" fill="#fff" stroke="none" /></Svg></button>
    <button aria-label="Reading view" className="ml-[24px]"><Svg w={14} h={12}><path d="M7 11.500C6 10.500 4 10.500.5 10.500v-9C4 1.500 6 1.500 7 2.500zM7 11.500c1-1 3-1 6.500-1v-9C10 1.500 8 1.500 7 2.500M2 4.500h3M2 6.500h3M2 8.500h3" stroke="#fff" /><path d="M8 3h5v7H8z" fill="#fff" stroke="none" opacity=".6" /></Svg></button>
    <button aria-label="Slide show" className="ml-[24px]"><Svg w={14} h={12}><path d="M0 .5h14M1.500 1v6h11V1M7 7v4M4 11.500h6" stroke="#fff" /></Svg></button>
    <button aria-label="Zoom out" className="ml-[16px] h-[2px] w-[7px] bg-white" />
    <span className="relative ml-[4px] flex w-[99px] items-center">
      <span className="absolute left-1/2 h-[5px] w-px bg-white" />
      <input type="range" aria-label="Zoom" defaultValue={40} className="relative h-[12px] w-full appearance-none bg-transparent [&::-webkit-slider-runnable-track]:h-px [&::-webkit-slider-runnable-track]:bg-[#f2b9a8] [&::-webkit-slider-thumb]:-mt-[5px] [&::-webkit-slider-thumb]:h-[11px] [&::-webkit-slider-thumb]:w-[4px] [&::-webkit-slider-thumb]:appearance-none [&::-webkit-slider-thumb]:bg-white" />
    </span>
    <button aria-label="Zoom in" className="ml-[4px]"><Svg s={8}><path d="M0 4h8M4 0v8" stroke="#fff" strokeWidth="2" /></Svg></button>
    <button className="ml-[16px] w-[34px] text-left">80%</button>
    <button aria-label="Fit to window"><Svg s={13}><path d="M.5 4V.5H4M9 .5h3.500V4M12.500 9v3.500H9M4 12.500H.5V9M6.500 2v3M6.500 8v3M2 6.500h3M8 6.500h3M5.500 3l1-1 1 1M5.500 10l1 1 1-1M3 5.500l-1 1 1 1M10 5.500l1 1-1 1" stroke="#fff" /></Svg></button>
  </footer>
);

const TaskApp = ({ name, run, active, children }: Kids & { name: string; run?: boolean; active?: boolean }) => (
  <button aria-label={name} className={`relative flex h-[40px] w-[49px] shrink-0 items-center justify-center ${active ? "bg-[#037c82]" : ""}`}>
    <svg width="24" height="24" viewBox="0 0 24 24" fill="none" aria-hidden="true">{children}</svg>
    {run && <span className={`absolute bottom-0 h-[2px] bg-[#8be0e6] ${active ? "inset-x-0" : "inset-x-[5px]"}`} />}
  </button>
);

const Taskbar = () => (
  <div className="flex h-[40px] shrink-0 items-center bg-[#02484d] text-white">
    <button aria-label="Start" className="flex w-[48px] shrink-0 justify-center">
      <svg width="16" height="16" viewBox="0 0 16 16" fill="#fff" aria-hidden="true"><path d="M0 2.300 6.600 1.400v6.200H0zM7.400 1.300 16 0v7.600H7.400zM0 8.400h6.600v6.200L0 13.700zM7.400 8.400H16V16l-8.600-1.300z" /></svg>
    </button>
    <label className="flex h-[40px] w-[288px] shrink-0 items-center overflow-hidden border border-[#5a9095] bg-[#336e72] pl-[11px]">
      <Svg s={17}><circle cx="10.500" cy="6.500" r="5.500" stroke="#fff" strokeWidth="1.200" /><path d="M6.500 10.500 1 16" stroke="#fff" strokeWidth="1.200" /></Svg>
      <input type="search" placeholder="Type here to search" aria-label="Search" className="ml-[11px] w-[168px] shrink-0 bg-transparent text-[15px] placeholder-[#cfe0e1] outline-none" />
      <svg width="80" height="38" viewBox="0 0 80 38" fill="none" className="shrink-0" aria-hidden="true">
        <path d="M0 38c14-9 50-9 80-6v6z" fill="#7ea65a" />
        <path d="M22 7l5-2c1-4 9-5 11 0l2 6c5 3 12 0 17 1 4 1 5 5 5 9l1 5-2-.5-2.500-6.500-2 6-1 10h-4l1-9-3-4h-8l-2 4-1 10h-4.500l1.500-10-4-6-1-8h-4l-5-1.500z" fill="#e3bd78" />
        <path d="M33 4c3 0 5 3 4 7-2 0-4-3-4-7z" fill="#c3924d" />
        <path d="M22 7l2-.5v1.500h-2z" fill="#4a3423" />
        <path d="M23 9.500h2.500v2H23z" fill="#c9545a" />
        <path d="M31 16l12 2M43 17v6" stroke="#7b5a35" strokeWidth="1.500" />
        <path d="M40 16l3-9c1-3 6-3 5 0l-4 10z" stroke="#aab4dc" strokeWidth="1.300" />
      </svg>
    </label>
    <TaskApp name="Task view">
      <path d="M4 6.500V4M15 6.500V4M4 5.500h11M4.600 9.500h9.800v6H4.600zM4 18v2.500M15 18v2.500M4 19h11M18.500 4v3M18.500 12v8.500" stroke="#fff" strokeWidth="1.300" />
      <path d="M17 8.500h3v3h-3z" fill="#fff" />
    </TaskApp>
    <TaskApp name="File Explorer" run>
      <path d="M2 3h9l2 3h9v15H2z" fill="#f9a825" />
      <path d="M2 6h20v15H2z" fill="#ffdb6b" />
      <path d="M5.500 21v-8h13v8h-4v-4h-5v4z" fill="#2f8fdb" />
    </TaskApp>
    <TaskApp name="Media Player">
      <path d="M8 3h13v18H8z" fill="#5fa9d6" />
      <path d="M3 3.500h14v17H3z" fill="#9ed0ee" />
      <circle cx="11" cy="12" r="7" fill="#f0842c" />
      <path d="M8.500 7.500v9l7.500-4.500z" fill="#fff" />
    </TaskApp>
    <TaskApp name="Excel">
      <path d="M13 3.500h9v17h-9z" fill="#fff" stroke="#1e7145" />
      <path d="M14.500 6.500H17M18.500 6.500H21M14.500 9.500H17M18.500 9.500H21M14.500 12.500H17M18.500 12.500H21M14.500 15.500H17M18.500 15.500H21M14.500 18H17M18.500 18H21" stroke="#1e7145" strokeWidth="1.700" />
      <path d="M1 3 14 1v22L1 21z" fill="#1e7145" />
      <path d="M5 8l5 8M10 8l-5 8" stroke="#fff" strokeWidth="1.900" />
    </TaskApp>
    <TaskApp name="Paint">
      <path d="M12 4c6 0 10 3 10 8 0 6-5 10-11 10S1 18 1 13 6 4 12 4z" fill="#c9dff0" />
      <circle cx="11.500" cy="14.500" r="2" fill="#02484d" />
      <circle cx="5" cy="13" r="2" fill="#e5474b" /><circle cx="8" cy="8.500" r="2" fill="#53b04c" /><circle cx="13.500" cy="7" r="2" fill="#f6c945" /><circle cx="7" cy="18" r="1.700" fill="#3f8fd8" />
      <path d="M12 23 19 5l2 1-7 17z" fill="#e88a2d" />
      <path d="M18 5l3-4 3 1-3 5z" fill="#b98355" />
    </TaskApp>
    <TaskApp name="Store">
      <path d="M7 6V2.500h10V6" stroke="#1da1e6" strokeWidth="2.200" />
      <path d="M1 5.500h23v15a3 3 0 0 1-3 3H4a3 3 0 0 1-3-3z" fill="#f5f5f5" />
      <path d="M8 10h4v4H8z" fill="#e8482c" /><path d="M13 10h4v4h-4z" fill="#6eb52b" /><path d="M8 15h4v4H8z" fill="#1b9be0" /><path d="M13 15h4v4h-4z" fill="#fbb416" />
    </TaskApp>
    <TaskApp name="Power BI" run>
      <path d="M13 0h9v24h-9z" fill="#dfa012" /><path d="M8 6h9v18H8z" fill="#f0c02c" /><path d="M3 12h8v12H3z" fill="#fbe07a" />
    </TaskApp>
    <TaskApp name="Chrome">
      <circle cx="12" cy="12" r="12" fill="#fbc116" />
      <path d="M12 12 1.600 6A12 12 0 0 1 22.400 6H12z" fill="#e33b2e" />
      <path d="M1.600 6A12 12 0 0 0 12 24l5.200-9L12 12 6.800 15z" fill="#2ba24c" />
      <circle cx="12" cy="12" r="6" fill="#fff" /><circle cx="12" cy="12" r="4.700" fill="#3b7ded" />
    </TaskApp>
    <TaskApp name="Edge">
      <circle cx="12" cy="12" r="12" fill="#1a7fd0" />
      <path d="M0 11C1 4 6 0 12 0c7 0 12 5 12 10 0 4-3 6-6 6s-4-1-4-2c2-1 2-6-3-7-5 0-9 1-11 4z" fill="#3cc6c8" />
      <path d="M15 .5C21 2 24 6 24 10c0 4-3 6-6 6s-4-1-4-2c4-3 4-8 1-13.500z" fill="#5fd87c" />
      <path d="M9 9c-4 4-3 11 4 15-8 1-13-5-13-12 2-4 6-5 9-3z" fill="#1b86d8" />
      <path d="M9.500 11c-1 7 5 9 12.500 7-2 4-5 6-9 6-5-3-7-9-3.500-13z" fill="#1558a8" />
      <path d="M11 9c3-1 5 2 3 5 0 2 4 3 9 1l-1 2.500c-7 2.500-14-1-11-8.500z" fill="#02484d" />
    </TaskApp>
    <TaskApp name="WinRAR" run>
      <path d="M0 1h24v7H0z" fill="#c42a45" /><path d="M0 8.500h24v7H0z" fill="#4545a5" /><path d="M0 16h24v7H0z" fill="#2c7a3b" />
      <path d="M0 3h24M0 10.500h24M0 18h24" stroke="#fff" opacity=".35" />
      <path d="M2 1h2v22H2z" fill="#e8b33a" /><path d="M8 2h8v20H8z" fill="#c5651f" /><path d="M9 1h6v4H9z" fill="#f3b93f" /><path d="M9 11h6v5H9z" fill="#e9e9e9" /><path d="M11 9h2v5h-2z" fill="#8b4513" />
    </TaskApp>
    <TaskApp name="PowerPoint" run active>
      <path d="M12 3.500h11v17H12z" fill="#fff" stroke="#d24726" />
      <path d="M17 6a3.500 3.500 0 1 0 3.500 3.500H17zM14 15.500h7M14 18h7" fill="#d24726" stroke="#d24726" />
      <path d="M1 3 14 1v22L1 21z" fill="#d24726" />
      <path d="M5.500 17V8h2.500a2.500 2.500 0 0 1 0 5H5.500" stroke="#fff" strokeWidth="2" />
    </TaskApp>
    <span className="grow" />
    <button aria-label="Show hidden icons"><Svg w={12} h={8}><path d="M1 7l5-5 5 5" stroke="#fff" strokeWidth="1.300" /></Svg></button>
    <button aria-label="Network" className="ml-[13px]"><Svg s={14}><path d="M2 13A11 11 0 0 1 13 2M5 13a8 8 0 0 1 8-8M8 13a5 5 0 0 1 5-5" stroke="#fff" /><circle cx="11.500" cy="11.500" r="1.700" fill="#fff" stroke="none" /><path d="M0 13A13 13 0 0 1 13 0" stroke="#7aa0a3" /></Svg></button>
    <button aria-label="Volume" className="ml-[7px]"><Svg w={17} h={14}><path d="M1 5v4h3l4 4V1L4 5zM10 5c1 1 1 3 0 4M12 3c2 2 2 6 0 8M14 1c3 3 3 9 0 12" stroke="#fff" /></Svg></button>
    <button className="ml-[10px]">ENG</button>
    <button className="ml-[12px] flex w-[60px] flex-col items-center whitespace-nowrap leading-[18px]"><span>11:52</span><span>26-04-2024</span></button>
    <button aria-label="Notifications" className="ml-[16px] mr-[25px]"><Svg s={16}><path d="M.5 1.500h15v11H11l-3 3v-3H.5z" stroke="#fff" /></Svg></button>
  </div>
);

export default function App() {
  return (
    <div className="relative flex h-screen min-h-[860px] flex-col overflow-hidden bg-white font-['Open_Sans','Noto_Sans',sans-serif] text-[12px] leading-4">
      <Header />
      <Ribbon />
      <div className="flex min-h-0 grow bg-linear-to-b from-white to-[#efefef]">
        <Thumbs />
        <Stage />
        <FormatPane />
      </div>
      <StatusBar />
      <Taskbar />
      <button aria-label="Open side panel" className="absolute right-0 top-[393px] h-[74px] w-[8px] rounded-l-[8px] bg-[#a95cff]" />
    </div>
  );
}
